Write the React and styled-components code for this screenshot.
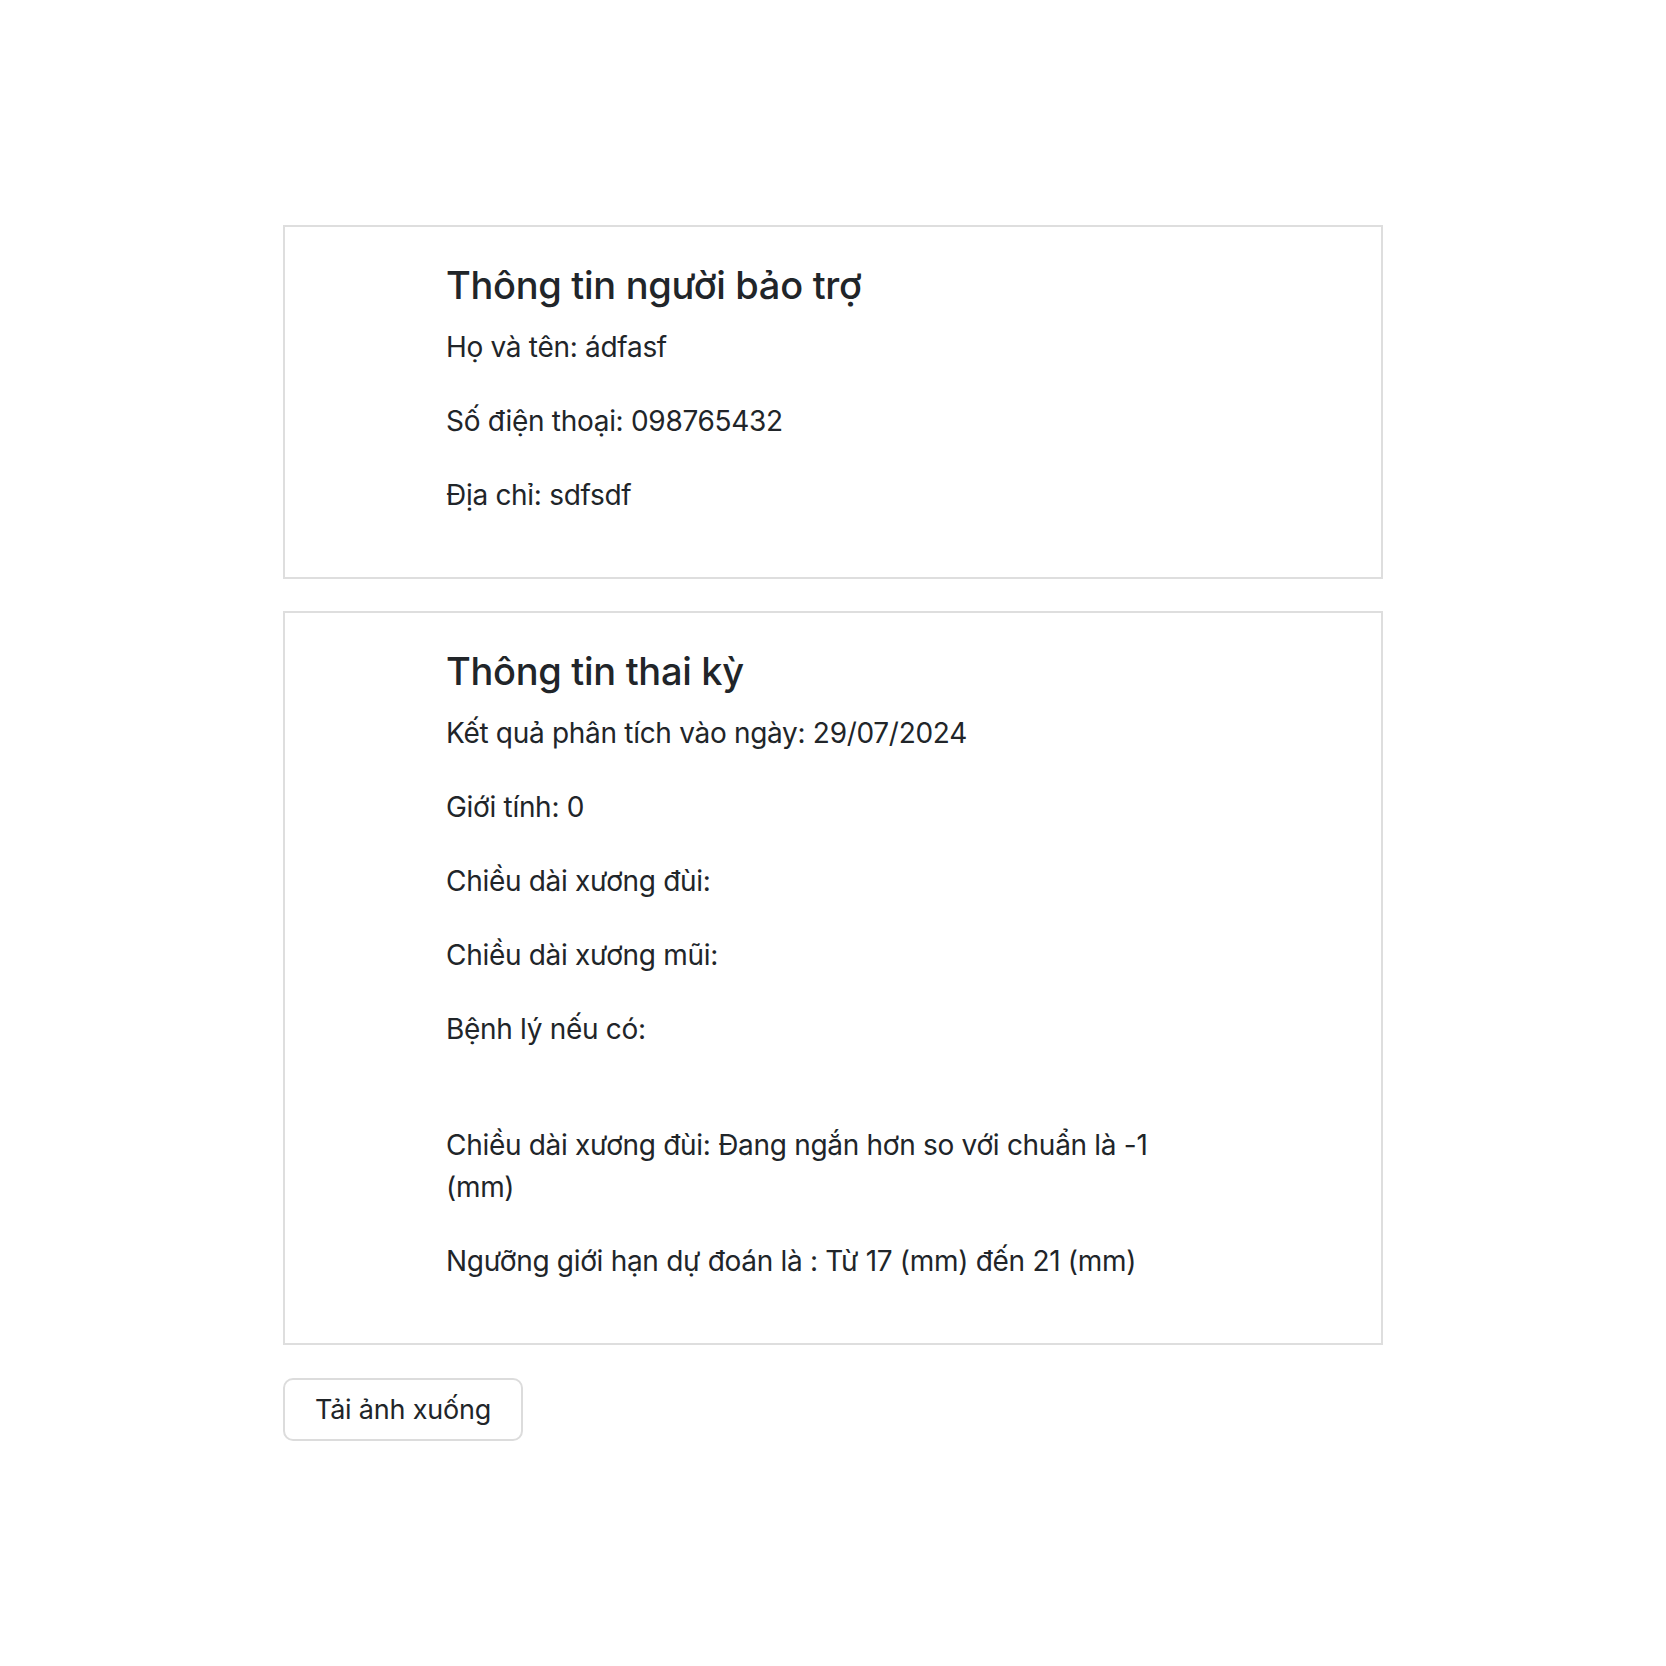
import styled, {createGlobalStyle} from "styled-components";

const GlobalStyle = createGlobalStyle`
  body {
    margin: 0;
    background: #ffffff;
    color: #212529;
    font-family: Inter, "Noto Sans", "Liberation Sans", sans-serif;
  }
`

const Page = styled.div`
  width: 1100px;
  margin: 0 auto;
  padding-top: 225px;
  display: flex;
  flex-direction: column;
  gap: 32px;
`

const Card = styled.div`
  border: 2px solid #dedede;
  padding: 35px 161px 29px;
`

const Title = styled.h5`
  margin: 0 0 18px;
  font-size: 38px;
  font-weight: 500;
  line-height: 46px;
  letter-spacing: -0.3px;
`

const Line = styled.p`
  margin: 0 0 32px;
  font-size: 28px;
  line-height: 42px;
  letter-spacing: -0.3px;
`

const Spacer = styled.div`
  height: 42px;
`

const Button = styled.button`
  align-self: flex-start;
  width: 240px;
  height: 63px;
  margin-top: 1px;
  background: #ffffff;
  border: 2px solid #dcdcdc;
  border-radius: 10px;
  font-family: inherit;
  font-size: 27px;
  color: #212529;
  letter-spacing: -0.2px;
  cursor: pointer;
`

const App = () => {
    return (
        <div>
            <GlobalStyle/>
            <Page>
                <Card>
                    <Title>Thông tin người bảo trợ</Title>
                    <Line>Họ và tên: ádfasf</Line>
                    <Line>Số điện thoại: 098765432</Line>
                    <Line>Địa chỉ: sdfsdf</Line>
                </Card>

                <Card>
                    <Title>Thông tin thai kỳ</Title>
                    <Line>Kết quả phân tích vào ngày: 29/07/2024</Line>
                    <Line>Giới tính: 0</Line>
                    <Line>Chiều dài xương đùi: </Line>
                    <Line>Chiều dài xương mũi: </Line>
                    <Line>Bệnh lý nếu có: </Line>
                    <Spacer/>
                    <Line>Chiều dài xương đùi: Đang ngắn hơn so với chuẩn là -1 <br/>(mm)</Line>
                    <Line>Ngưỡng giới hạn dự đoán là : Từ 17 (mm) đến 21 (mm)</Line>
                </Card>

                <Button>Tải ảnh xuống</Button>
            </Page>
        </div>
    )
}

export default App
